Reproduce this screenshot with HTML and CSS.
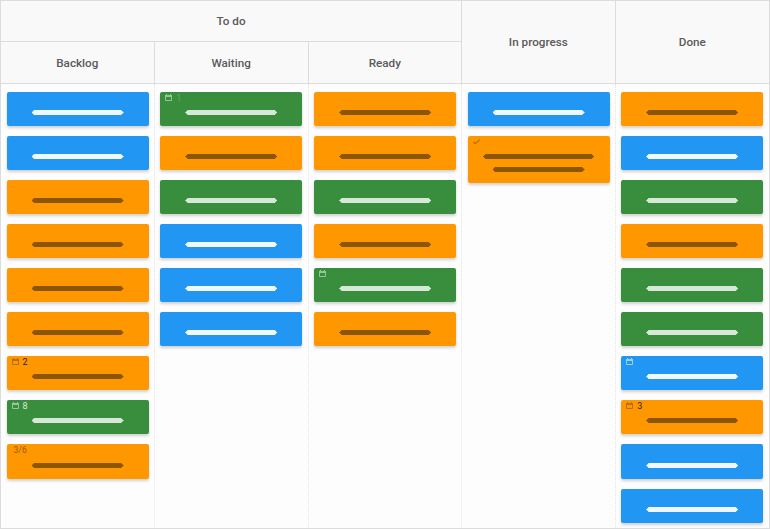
FILE: index.html
```html
<!DOCTYPE html>
<html lang="en">
<head>
    <meta charset="UTF-8">
    <meta name="viewport" content="width=device-width, initial-scale=1.0">
    <title>Kanban board</title>
    <link rel="stylesheet" href="styles.css">
</head>
<body>
    <svg class="icon-defs" width="0" height="0">
        <symbol id="cal" viewBox="0 0 7 7">
            <path d="M0.5 1.5h6v5h-6z" fill="none" stroke="currentColor"/>
            <path d="M0 1h7v2h-7z M1 0h1v1h-1z M5 0h1v1h-1z" fill="currentColor"/>
        </symbol>
    </svg>

    <div class="board">
        <!-- Header -->
        <div class="head">
            <div class="head-cell group">To do</div>
            <div class="head-cell tall progress">In progress</div>
            <div class="head-cell tall done">Done</div>
            <div class="head-cell">Backlog</div>
            <div class="head-cell">Waiting</div>
            <div class="head-cell">Ready</div>
        </div>

        <!-- Columns -->
        <div class="columns">
            <div class="column">
                <div class="card blue"><span class="line"><i class="bar"></i></span></div>
                <div class="card blue"><span class="line"><i class="bar"></i></span></div>
                <div class="card orange"><span class="line"><i class="bar"></i></span></div>
                <div class="card orange"><span class="line"><i class="bar"></i></span></div>
                <div class="card orange"><span class="line"><i class="bar"></i></span></div>
                <div class="card orange"><span class="line"><i class="bar"></i></span></div>
                <div class="card orange">
                    <div class="meta"><svg class="icon"><use href="#cal"/></svg><span class="num">2</span></div>
                    <span class="line"><i class="bar"></i></span>
                </div>
                <div class="card green">
                    <div class="meta"><svg class="icon"><use href="#cal"/></svg><span class="num">8</span></div>
                    <span class="line"><i class="bar"></i></span>
                </div>
                <div class="card orange tasks">
                    <div class="meta"><span class="count">3/6</span></div>
                    <span class="line"><i class="bar"></i></span>
                </div>
            </div>

            <div class="column">
                <div class="card green">
                    <div class="meta"><svg class="icon"><use href="#cal"/></svg><span class="num faint">1</span></div>
                    <span class="line"><i class="bar"></i></span>
                </div>
                <div class="card orange"><span class="line"><i class="bar"></i></span></div>
                <div class="card green"><span class="line"><i class="bar"></i></span></div>
                <div class="card blue"><span class="line"><i class="bar"></i></span></div>
                <div class="card blue"><span class="line"><i class="bar"></i></span></div>
                <div class="card blue"><span class="line"><i class="bar"></i></span></div>
            </div>

            <div class="column">
                <div class="card orange"><span class="line"><i class="bar"></i></span></div>
                <div class="card orange"><span class="line"><i class="bar"></i></span></div>
                <div class="card green"><span class="line"><i class="bar"></i></span></div>
                <div class="card orange"><span class="line"><i class="bar"></i></span></div>
                <div class="card green">
                    <div class="meta"><svg class="icon"><use href="#cal"/></svg></div>
                    <span class="line"><i class="bar"></i></span>
                </div>
                <div class="card orange"><span class="line"><i class="bar"></i></span></div>
            </div>

            <div class="column">
                <div class="card blue"><span class="line"><i class="bar"></i></span></div>
                <div class="card orange">
                    <div class="meta">
                        <svg class="icon check" viewBox="0 0 8 6"><path d="M0.5 3l2.2 2 4.8-4.5" fill="none" stroke="currentColor" stroke-width="1.4"/></svg>
                    </div>
                    <span class="line"><i class="bar wide"></i></span>
                    <span class="line"><i class="bar"></i></span>
                </div>
            </div>

            <div class="column last">
                <div class="card orange"><span class="line"><i class="bar"></i></span></div>
                <div class="card blue"><span class="line"><i class="bar"></i></span></div>
                <div class="card green"><span class="line"><i class="bar"></i></span></div>
                <div class="card orange"><span class="line"><i class="bar"></i></span></div>
                <div class="card green"><span class="line"><i class="bar"></i></span></div>
                <div class="card green"><span class="line"><i class="bar"></i></span></div>
                <div class="card blue">
                    <div class="meta"><svg class="icon"><use href="#cal"/></svg></div>
                    <span class="line"><i class="bar"></i></span>
                </div>
                <div class="card orange">
                    <div class="meta"><svg class="icon"><use href="#cal"/></svg><span class="num">3</span></div>
                    <span class="line"><i class="bar"></i></span>
                </div>
                <div class="card blue tasks"><span class="line"><i class="bar"></i></span></div>
                <div class="card blue"><span class="line"><i class="bar"></i></span></div>
            </div>
        </div>
    </div>
</body>
</html>
```

FILE: styles.css
```css
/* Kanban board */
html, body {
    height: 100%;
}

body {
    margin: 0;
    font-family: Roboto, "Liberation Sans", sans-serif;
    color: #5a5a5a;
    background-color: #fff;
}

.icon-defs {
    display: block;
    height: 0;
}

.board {
    box-sizing: border-box;
    height: 529px;
    overflow: hidden;
    border: 1px solid #dcdcdc;
    background-color: #fdfdfd;
    display: flex;
    flex-direction: column;
}

.head {
    display: grid;
    grid-template-columns: 153.6px 154px 153.4px 153.6px 1fr;
    grid-template-rows: 41px 41px;
    background-color: #f9f9f9;
    border-bottom: 1px solid #dcdcdc;
}

.head-cell {
    display: flex;
    align-items: center;
    justify-content: center;
    font-size: 11.7px;
    font-weight: 500;
    border-right: 1px solid #dcdcdc;
}

.head-cell.group {
    grid-column: 1 / span 3;
    border-bottom: 1px solid #dcdcdc;
}

.head-cell.tall {
    grid-row: 1 / span 2;
}

.head-cell.progress {
    grid-column: 4;
}

.head-cell.done {
    grid-column: 5;
    border-right: none;
}

.columns {
    flex: 1;
    display: grid;
    grid-template-columns: 153.6px 154px 153.4px 153.6px 1fr;
}

.column {
    padding: 8px 0 0 5.6px;
    border-right: 1px dotted #e4e4e4;
    display: flex;
    flex-direction: column;
    gap: 10px;
    min-width: 0;
}

.column.last {
    border-right: none;
}

.card {
    position: relative;
    width: 142px;
    padding: 14px 0 7px;
    border-radius: 2px;
    box-shadow: 0 2px 3px rgba(0, 0, 0, 0.18);
    display: flex;
    flex-direction: column;
    align-items: center;
}

.card.tasks {
    padding-top: 15px;
}

.blue {
    background-color: #2196f3;
    color: #f0f7fe;
}

.orange {
    background-color: #ff9800;
    color: #8c5500;
}

.green {
    background-color: #388e3c;
    color: #d7e8d8;
}

.line {
    height: 13px;
    display: flex;
    align-items: center;
}

/* blurred out card titles */
.bar {
    display: block;
    width: 92px;
    height: 5px;
    background-color: currentColor;
    clip-path: polygon(0 2px, 1px 2px, 1px 1px, 2px 1px, 2px 0, calc(100% - 2px) 0, calc(100% - 2px) 1px, calc(100% - 1px) 1px, calc(100% - 1px) 2px, 100% 2px, 100% 3px, calc(100% - 1px) 3px, calc(100% - 1px) 4px, calc(100% - 2px) 4px, calc(100% - 2px) 100%, 2px 100%, 2px 4px, 1px 4px, 1px 3px, 0 3px);
}

.bar.wide {
    width: 111px;
}

.meta {
    position: absolute;
    top: 1px;
    left: 5px;
    display: flex;
    align-items: flex-start;
    gap: 4px;
    font-size: 9px;
    line-height: 10px;
}

.icon {
    width: 7px;
    height: 7px;
    margin-top: 1px;
    opacity: 0.6;
}

.icon.check {
    height: 6px;
    margin-top: 2px;
}

.num {
    color: #000;
    opacity: 0.8;
}

.green .num {
    color: #fff;
}

.num.faint {
    opacity: 0.2;
}

.count {
    padding-left: 2px;
    font-size: 8.5px;
    opacity: 0.9;
}
```
